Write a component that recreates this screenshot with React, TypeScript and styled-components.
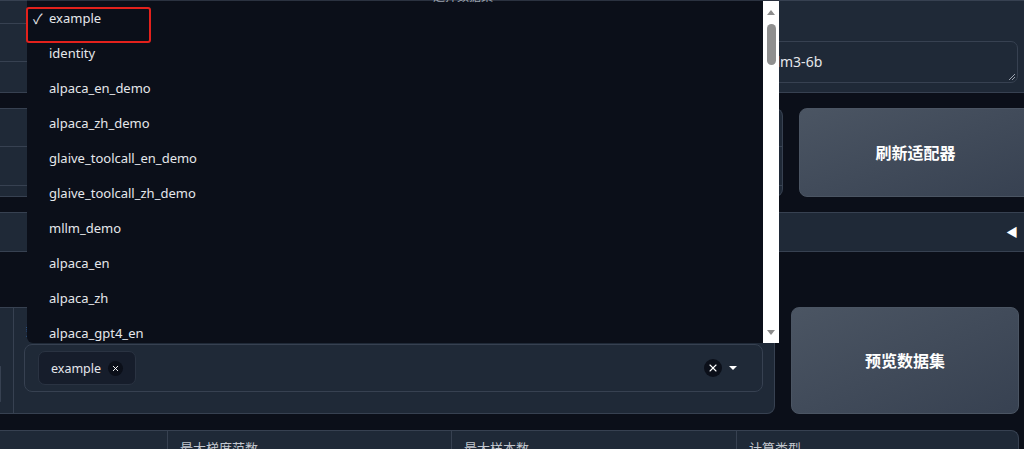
import React from "react";
import styled, { createGlobalStyle } from "styled-components";
import { X } from "lucide-react";

const Global = createGlobalStyle`
  html, body { margin: 0; padding: 0; background: #0b0f19; overflow: hidden; }
  body { font-family: "Noto Sans", "Noto Sans CJK SC", sans-serif; color: #e5e7eb; }
  * { box-sizing: border-box; }
`;

const Page = styled.div`
  position: relative;
  width: 1024px;
  height: 449px;
  overflow: hidden;
  display: flex;
  flex-direction: column;
`;

const Row = styled.div<{ $top: number; $h: number; $bleed?: boolean }>`
  display: flex;
  gap: 16px;
  flex: 0 0 ${(p) => p.$h}px;
  margin-top: ${(p) => p.$top}px;
  margin-right: ${(p) => (p.$bleed ? "-8px" : "5px")};
`;

const Panel = styled.div<{ $w?: number; $radius?: string }>`
  background: #1f2937;
  border: 1px solid #374151;
  border-left: none;
  border-radius: ${(p) => p.$radius || "0"};
  ${(p) => (p.$w ? `flex: 0 0 ${p.$w}px;` : "flex: 1;")}
  display: flex;
  overflow: hidden;
`;

const Stack = styled.div<{ $w?: number }>`
  display: flex;
  flex-direction: column;
  ${(p) => (p.$w ? `flex: 0 0 ${p.$w}px;` : "flex: 1;")}
`;

const Cell = styled.div<{ $h?: number }>`
  ${(p) => (p.$h ? `flex: 0 0 ${p.$h}px;` : "flex: 1;")}
  border-bottom: 1px solid #374151;
  &:last-child { border-bottom: none; }
`;

const Field = styled.div`
  flex: 1;
  display: flex;
  flex-direction: column;
  padding: 0 13px 9px 10px;
`;

const FieldLabel = styled.div`
  flex: 0 0 40px;
  font-size: 13px;
  color: #9ca3af;
  padding-top: 12px;
`;

const TextArea = styled.div`
  flex: 0 0 42px;
  border: 1px solid #374151;
  border-radius: 7px;
  padding: 10px 0 0 12px;
  font-size: 14px;
  color: #e5e7eb;
  position: relative;
  white-space: nowrap;
`;

const Grip = styled.span`
  position: absolute;
  right: 2px;
  bottom: 2px;
  width: 6px;
  height: 6px;
  background: linear-gradient(135deg, transparent 45%, #9ca3af 45%, #9ca3af 55%, transparent 55%, transparent 70%, #9ca3af 70%, #9ca3af 80%, transparent 80%);
`;

const BigButton = styled.button<{ $w?: number }>`
  ${(p) => (p.$w ? `flex: 0 0 ${p.$w}px;` : "flex: 1;")}
  border: 1px solid #4b5563;
  border-radius: 8px;
  background: linear-gradient(to bottom right, #4b5563, #374151);
  color: #ffffff;
  font-family: "Noto Sans CJK SC", sans-serif;
  font-weight: 700;
  font-size: 16px;
  display: flex;
  align-items: center;
  justify-content: center;
  padding: 0 0 2px 0;
`;

const Accordion = styled.div`
  flex: 1;
  background: #1f2937;
  border-top: 1px solid #374151;
  border-bottom: 1px solid #374151;
  display: flex;
  align-items: center;
  justify-content: flex-end;
  padding-right: 14px;
  color: #ffffff;
  font-size: 12px;
`;

const Stub = styled.div`
  flex: 0 0 14px;
  padding: 58px 12px 0 0;
  border-right: 1px solid #374151;
`;

const StubBox = styled.div`
  height: 36px;
  border: 1px solid #374151;
  border-left: none;
  border-radius: 0 6px 6px 0;
`;

const DataBlock = styled.div`
  flex: 1;
  display: flex;
  flex-direction: column;
  padding: 0 11px 0 10px;
`;

const DataLabel = styled.div`
  flex: 0 0 36px;
  font-size: 13px;
  color: #9ca3af;
  padding: 12px 0 0 2px;
`;

const MultiInput = styled.div`
  flex: 0 0 48px;
  border: 1px solid #374151;
  border-radius: 8px;
  background: #1f2937;
  display: flex;
  align-items: center;
  padding: 0 25px 0 13px;
`;

const Chip = styled.div`
  height: 34px;
  display: flex;
  align-items: center;
  gap: 7px;
  padding: 0 12px 0 12px;
  border: 1px solid #2a3342;
  border-radius: 7px;
  background: #161d2b;
  font-size: 12.5px;
  color: #e5e7eb;
`;

const Dot = styled.span<{ $d: number }>`
  width: ${(p) => p.$d}px;
  height: ${(p) => p.$d}px;
  border-radius: 50%;
  background: #0b0f19;
  color: #ffffff;
  display: inline-flex;
  align-items: center;
  justify-content: center;
`;

const Spacer = styled.div`
  flex: 1;
`;

const Caret = styled.span`
  margin-left: 7px;
  width: 0;
  height: 0;
  border-left: 4px solid transparent;
  border-right: 4px solid transparent;
  border-top: 4px solid #ffffff;
`;

const Grid = styled.div`
  flex: 1;
  display: grid;
  grid-template-columns: 167px 284px 285px 1fr;
  background: #1f2937;
  border: 1px solid #374151;
  border-left: none;
  border-bottom: none;
  border-radius: 0 8px 0 0;
`;

const GridCol = styled.div`
  border-left: 1px solid #374151;
  padding: 7px 0 0 12px;
  font-family: "Noto Sans CJK SC", sans-serif;
  font-size: 13px;
  color: #c3c7cf;
  &:first-child { border-left: none; }
`;

/* Dropdown overlay */
const Dropdown = styled.div`
  position: absolute;
  left: 27px;
  top: 0;
  width: 752px;
  height: 343px;
  background: #0b0f19;
  border-top: 1px solid #2b3240;
  border-radius: 0 0 0 6px;
  display: flex;
`;

const List = styled.ul`
  flex: 1;
  margin: -1px 0 0 0;
  padding: 0;
  list-style: none;
  overflow: hidden;
`;

const Item = styled.li`
  height: 35px;
  display: flex;
  align-items: center;
  font-size: 13px;
  color: #e5e7eb;
`;

const Check = styled.span`
  flex: 0 0 22px;
  padding-left: 6px;
  font-size: 14px;
`;

const PeekLabel = styled.span`
  position: absolute;
  left: 406px;
  top: -14px;
  font-family: "Noto Sans CJK SC", sans-serif;
  font-size: 12px;
  color: #9ca3af;
`;

const Scrollbar = styled.div`
  flex: 0 0 16px;
  background: #ffffff;
  display: flex;
  flex-direction: column;
  align-items: center;
  padding: 9px 0 8px 0;
`;

const Arrow = styled.span<{ $down?: boolean }>`
  width: 0;
  height: 0;
  border-left: 4.5px solid transparent;
  border-right: 4.5px solid transparent;
  ${(p) => (p.$down ? "border-top: 5px solid #8c8c8c;" : "border-bottom: 5px solid #8c8c8c;")}
`;

const Thumb = styled.div`
  margin-top: 9px;
  width: 9px;
  height: 41px;
  border-radius: 5px;
  background: #8f8f8f;
`;

const Highlight = styled.div`
  position: absolute;
  left: 26px;
  top: 7px;
  width: 125px;
  height: 36px;
  border: 2px solid #e3211c;
  border-radius: 3px;
`;

const items = [
  "example",
  "identity",
  "alpaca_en_demo",
  "alpaca_zh_demo",
  "glaive_toolcall_en_demo",
  "glaive_toolcall_zh_demo",
  "mllm_demo",
  "alpaca_en",
  "alpaca_zh",
  "alpaca_gpt4_en",
];

export default function App() {
  return (
    <>
      <Global />
      <Page>
        <Row $top={0} $h={93} $bleed>
          <Panel>
            <Stack $w={660}>
              <Cell $h={23} />
              <Cell $h={38} />
              <Cell />
            </Stack>
            <Field>
              <FieldLabel>模型路径</FieldLabel>
              <TextArea>
                THUDM/chatglm3-6b
                <Grip />
              </TextArea>
            </Field>
          </Panel>
        </Row>

        <Row $top={15} $h={89} $bleed>
          <Panel $w={783} $radius="0 8px 8px 0">
            <Stack>
              <Cell $h={38} />
              <Cell $h={39} />
              <Cell />
            </Stack>
          </Panel>
          <BigButton>刷新适配器</BigButton>
        </Row>

        <Row $top={15} $h={40} $bleed>
          <Accordion>◀</Accordion>
        </Row>

        <Row $top={55} $h={107}>
          <Panel $w={775} $radius="0 8px 8px 0">
            <Stub>
              <StubBox />
            </Stub>
            <DataBlock>
              <DataLabel>数据集</DataLabel>
              <MultiInput>
                <Chip>
                  example
                  <Dot $d={15}>
                    <X size={9} strokeWidth={2.5} />
                  </Dot>
                </Chip>
                <Spacer />
                <Dot $d={18}>
                  <X size={12} strokeWidth={2.2} />
                </Dot>
                <Caret />
              </MultiInput>
            </DataBlock>
          </Panel>
          <BigButton $w={228}>预览数据集</BigButton>
        </Row>

        <Row $top={16} $h={40}>
          <Grid>
            <GridCol />
            <GridCol>最大梯度范数</GridCol>
            <GridCol>最大样本数</GridCol>
            <GridCol>计算类型</GridCol>
          </Grid>
        </Row>

        <Dropdown>
          <PeekLabel>选择数据集</PeekLabel>
          <List>
            {items.map((name, i) => (
              <Item key={name}>
                <Check>{i === 0 ? "✓" : ""}</Check>
                {name}
              </Item>
            ))}
          </List>
          <Scrollbar>
            <Arrow />
            <Thumb />
            <Spacer />
            <Arrow $down />
          </Scrollbar>
        </Dropdown>
        <Highlight />
      </Page>
    </>
  );
}
